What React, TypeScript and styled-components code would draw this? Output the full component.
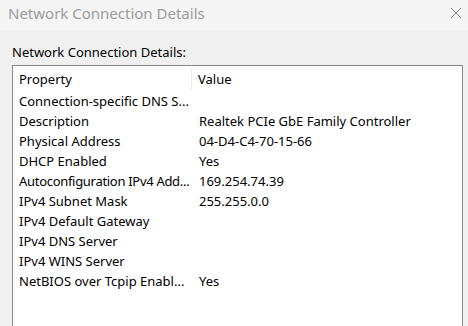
import styled, { createGlobalStyle } from "styled-components";

const Global = createGlobalStyle`
    html, body {
        margin: 0;
        padding: 0;
        background: #f0f0f0;
        overflow: hidden;
    }
    * { box-sizing: border-box; }
`

const Window = styled.div`
    width: 468px;
    height: 326px;
    background: #f0f0f0;
    font-family: "Noto Sans", "Open Sans", sans-serif;
    color: #000;
    display: flex;
    flex-direction: column;
`

const TitleBar = styled.div`
    height: 31px;
    background: #f5f5f5;
    display: flex;
    align-items: center;
    justify-content: space-between;
    padding: 0 6px 6px 8px;
`

const TitleText = styled.span`
    font-size: 15px;
    color: #9b9b9b;
`

const Close = styled.svg`
    width: 12px;
    height: 12px;
`

const Body = styled.div`
    flex: 1;
    display: flex;
    flex-direction: column;
    padding: 11px 5px 0 12px;
`

const Label = styled.div`
    font-size: 13px;
    line-height: 20px;
    margin-bottom: 3px;
`

const ListBox = styled.div`
    flex: 1;
    background: #fff;
    border: 1px solid #828790;
    border-bottom: none;
    padding: 0 6px;
`

const Row = styled.div<{ $header?: boolean }>`
    display: grid;
    grid-template-columns: 172px 1fr;
    height: ${p => (p.$header ? 25 : 20)}px;
    align-items: center;
    font-size: 13px;
    padding-top: ${p => (p.$header ? 2 : 0)}px;
    padding-bottom: ${p => (p.$header ? 1 : 0)}px;
`

const Cell = styled.div<{ $value?: boolean; $divider?: boolean; $tight?: boolean }>`
    white-space: nowrap;
    height: 100%;
    display: flex;
    align-items: center;
    letter-spacing: ${p => (p.$tight ? "-0.3px" : "normal")};
    padding-left: ${p => (p.$value ? (p.$divider ? 6 : 8) : 0)}px;
    border-left: ${p => (p.$divider ? "1px solid #ebebeb" : "none")};
`

const rows: [string, string, boolean?][] = [
    ["Connection-specific DNS S...", ""],
    ["Description", "Realtek PCIe GbE Family Controller"],
    ["Physical Address", "04-D4-C4-70-15-66"],
    ["DHCP Enabled", "Yes"],
    ["Autoconfiguration IPv4 Add...", "169.254.74.39", true],
    ["IPv4 Subnet Mask", "255.255.0.0"],
    ["IPv4 Default Gateway", ""],
    ["IPv4 DNS Server", ""],
    ["IPv4 WINS Server", ""],
    ["NetBIOS over Tcpip Enabl...", "Yes"],
]

export default function App() {
    return (
        <Window>
            <Global />
            <TitleBar>
                <TitleText>Network Connection Details</TitleText>
                <Close viewBox="0 0 12 12">
                    <path d="M1 1 L11 11 M11 1 L1 11" stroke="#8a8a8a" strokeWidth="1" fill="none" />
                </Close>
            </TitleBar>
            <Body>
                <Label>Network Connection Details:</Label>
                <ListBox>
                    <Row $header>
                        <Cell>Property</Cell>
                        <Cell $value $divider>Value</Cell>
                    </Row>
                    {rows.map(([k, v, tight]) => (
                        <Row key={k}>
                            <Cell $tight={tight}>{k}</Cell>
                            <Cell $value>{v}</Cell>
                        </Row>
                    ))}
                </ListBox>
            </Body>
        </Window>
    )
}
